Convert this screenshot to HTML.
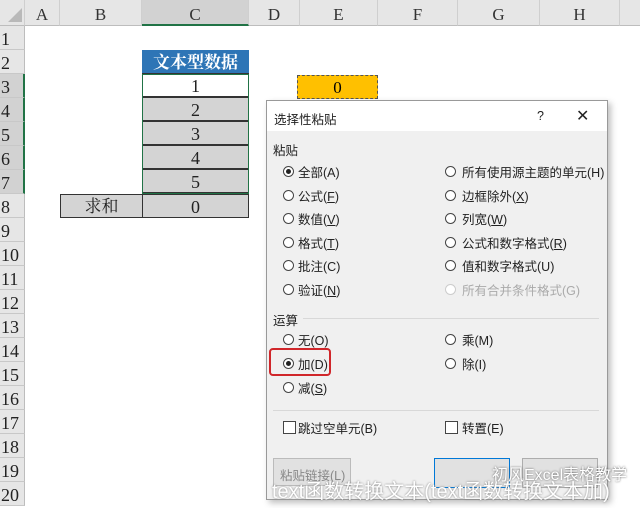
<!DOCTYPE html>
<html><head><meta charset="utf-8"><style>
body{margin:0;width:640px;height:501px;overflow:hidden;background:#fff;position:relative;font-family:"Liberation Serif","Noto Serif CJK SC",serif}
.a{position:absolute}
.ch{top:0;height:26px;background:#e6e6e6;border-right:1px solid #cfcfcf;border-bottom:1px solid #bdbdbd;text-align:center;line-height:30px;font-size:17px;color:#333;box-sizing:border-box}
.rh{left:0;width:25px;height:24px;background:#e6e6e6;border-bottom:1px solid #c8c8c8;border-right:1px solid #bdbdbd;box-sizing:border-box;font-size:18px;line-height:26px;color:#222;text-align:left;padding-left:1px}
.cell{left:142px;width:107px;height:24px;box-sizing:border-box;border:1px solid #333;text-align:center;font-size:18px;line-height:24px;background:#d4d4d4;color:#222}
.d{font-family:"Liberation Sans","Noto Sans CJK SC",sans-serif;font-size:12.5px;color:#222}
.d .t{margin-top:-2px}
.r{width:11px;height:11px;border:1px solid #444;border-radius:50%;box-sizing:border-box;background:#fff}
.r.on::after{content:"";position:absolute;left:2px;top:2px;width:5px;height:5px;border-radius:50%;background:#222}
.cb{width:13px;height:13px;border:1px solid #444;box-sizing:border-box;background:#fff}
</style></head><body>
<div class="a ch" style="left:0;width:25px"><svg width="25" height="26" style="position:absolute;left:0;top:0"><polygon points="22,8 22,22 8,22" fill="#b9b9b9"/></svg></div>
<div class="a ch" style="left:25px;width:35px">A</div>
<div class="a ch" style="left:60px;width:82px">B</div>
<div class="a ch" style="left:142px;width:107px;background:#d2d2d2;border-bottom:2px solid #217346">C</div>
<div class="a ch" style="left:249px;width:51px">D</div>
<div class="a ch" style="left:300px;width:78px">E</div>
<div class="a ch" style="left:378px;width:80px">F</div>
<div class="a ch" style="left:458px;width:82px">G</div>
<div class="a ch" style="left:540px;width:80px">H</div>
<div class="a ch" style="left:620px;width:20px;border-right:none"></div>
<div class="a rh" style="top:26px">1</div>
<div class="a rh" style="top:50px">2</div>
<div class="a rh" style="top:74px;background:#d2d2d2;border-right:2px solid #217346">3</div>
<div class="a rh" style="top:98px;background:#d2d2d2;border-right:2px solid #217346">4</div>
<div class="a rh" style="top:122px;background:#d2d2d2;border-right:2px solid #217346">5</div>
<div class="a rh" style="top:146px;background:#d2d2d2;border-right:2px solid #217346">6</div>
<div class="a rh" style="top:170px;background:#d2d2d2;border-right:2px solid #217346">7</div>
<div class="a rh" style="top:194px">8</div>
<div class="a rh" style="top:218px">9</div>
<div class="a rh" style="top:242px">10</div>
<div class="a rh" style="top:266px">11</div>
<div class="a rh" style="top:290px">12</div>
<div class="a rh" style="top:314px">13</div>
<div class="a rh" style="top:338px">14</div>
<div class="a rh" style="top:362px">15</div>
<div class="a rh" style="top:386px">16</div>
<div class="a rh" style="top:410px">17</div>
<div class="a rh" style="top:434px">18</div>
<div class="a rh" style="top:458px">19</div>
<div class="a rh" style="top:482px">20</div>
<div class="a cell" style="top:50px;background:#2e75b6;color:#fff;border-color:#2e75b6;font-weight:bold;font-size:17px">文本型数据</div>
<div class="a cell" style="top:73px;background:#fff">1</div>
<div class="a cell" style="top:97px">2</div>
<div class="a cell" style="top:121px">3</div>
<div class="a cell" style="top:145px">4</div>
<div class="a cell" style="top:169px">5</div>
<div class="a cell" style="top:194px">0</div>
<div class="a cell" style="top:194px;left:60px;width:83px;font-size:17px">求和</div>
<div class="a" style="left:142px;top:74px;width:107px;height:120px;box-sizing:border-box;border:1px solid #217346"></div>
<div class="a" style="left:297px;top:75px;width:81px;height:24px;box-sizing:border-box;background:#ffc000;border:1px dashed #555;text-align:center;line-height:24px;font-size:17px">0</div>
<div class="a d" style="left:266px;top:100px;width:340px;height:398px;background:#f0f0f0;border:1px solid #999;box-shadow:3px 3px 6px rgba(0,0,0,.25)">
 <div class="a" style="left:0;top:0;width:340px;height:30px;background:#fff"></div>
 <div class="a" style="left:7px;top:8px">选择性粘贴</div>
 <div class="a" style="left:270px;top:8px">?</div>
 <div class="a" style="left:309px;top:5px;font-size:16px">✕</div>
 <div class="a" style="left:6px;top:39px">粘贴</div>
 <div class="a" style="left:6px;top:209px">运算</div>
 <div class="a" style="left:36px;top:217px;width:296px;height:1px;background:#d8d8d8"></div>
 <div class="a" style="left:6px;top:309px;width:326px;height:1px;background:#d8d8d8"></div>
</div>
<div class="d">
<div class="a r on" style="left:283px;top:166px"></div><div class="a t" style="left:298px;top:164px">全部(A)</div>
<div class="a r" style="left:283px;top:190px"></div><div class="a t" style="left:298px;top:188px">公式(<u>F</u>)</div>
<div class="a r" style="left:283px;top:213px"></div><div class="a t" style="left:298px;top:211px">数值(<u>V</u>)</div>
<div class="a r" style="left:283px;top:237px"></div><div class="a t" style="left:298px;top:235px">格式(<u>T</u>)</div>
<div class="a r" style="left:283px;top:260px"></div><div class="a t" style="left:298px;top:258px">批注(C)</div>
<div class="a r" style="left:283px;top:284px"></div><div class="a t" style="left:298px;top:282px">验证(<u>N</u>)</div>
<div class="a r" style="left:445px;top:166px"></div><div class="a t" style="left:462px;top:164px">所有使用源主题的单元(H)</div>
<div class="a r" style="left:445px;top:190px"></div><div class="a t" style="left:462px;top:188px">边框除外(<u>X</u>)</div>
<div class="a r" style="left:445px;top:213px"></div><div class="a t" style="left:462px;top:211px">列宽(<u>W</u>)</div>
<div class="a r" style="left:445px;top:237px"></div><div class="a t" style="left:462px;top:235px">公式和数字格式(<u>R</u>)</div>
<div class="a r" style="left:445px;top:260px"></div><div class="a t" style="left:462px;top:258px">值和数字格式(U)</div>
<div class="a r" style="left:445px;top:284px;border-color:#ccc"></div><div class="a t" style="left:462px;top:282px;color:#aaa">所有合并条件格式(G)</div>
<div class="a r" style="left:283px;top:334px"></div><div class="a t" style="left:298px;top:332px">无(O)</div>
<div class="a r on" style="left:283px;top:358px"></div><div class="a t" style="left:298px;top:356px">加(D)</div>
<div class="a r" style="left:283px;top:382px"></div><div class="a t" style="left:298px;top:380px">减(<u>S</u>)</div>
<div class="a r" style="left:445px;top:334px"></div><div class="a t" style="left:462px;top:332px">乘(M)</div>
<div class="a r" style="left:445px;top:358px"></div><div class="a t" style="left:462px;top:356px">除(I)</div>
<div class="a" style="left:269px;top:348px;width:62px;height:28px;border:2px solid #d0262a;border-radius:4px;box-sizing:border-box"></div>
<div class="a cb" style="left:283px;top:421px"></div><div class="a t" style="left:298px;top:420px">跳过空单元(B)</div>
<div class="a cb" style="left:445px;top:421px"></div><div class="a t" style="left:462px;top:420px">转置(E)</div>
<div class="a" style="left:273px;top:458px;width:78px;height:28px;background:#e1e1e1;border:1px solid #bbb;box-sizing:border-box;color:#888;padding:6px 0 0 6px">粘贴链接(L)</div>
<div class="a" style="left:434px;top:458px;width:76px;height:30px;background:#e1e1e1;border:1px solid #0078d7;box-sizing:border-box"></div>
<div class="a" style="left:522px;top:458px;width:76px;height:30px;background:#e1e1e1;border:1px solid #adadad;box-sizing:border-box"></div>
<div class="a" style="left:492px;top:461px;color:#fff;font-size:16px;text-shadow:0 0 2px #555">初风Excel表格教学</div>
<div class="a" style="left:272px;top:475px;color:#fff;font-size:20px;white-space:nowrap;text-shadow:0 0 2px #777">text函数转换文本(text函数转换文本加)</div>
</div>
</body></html>
